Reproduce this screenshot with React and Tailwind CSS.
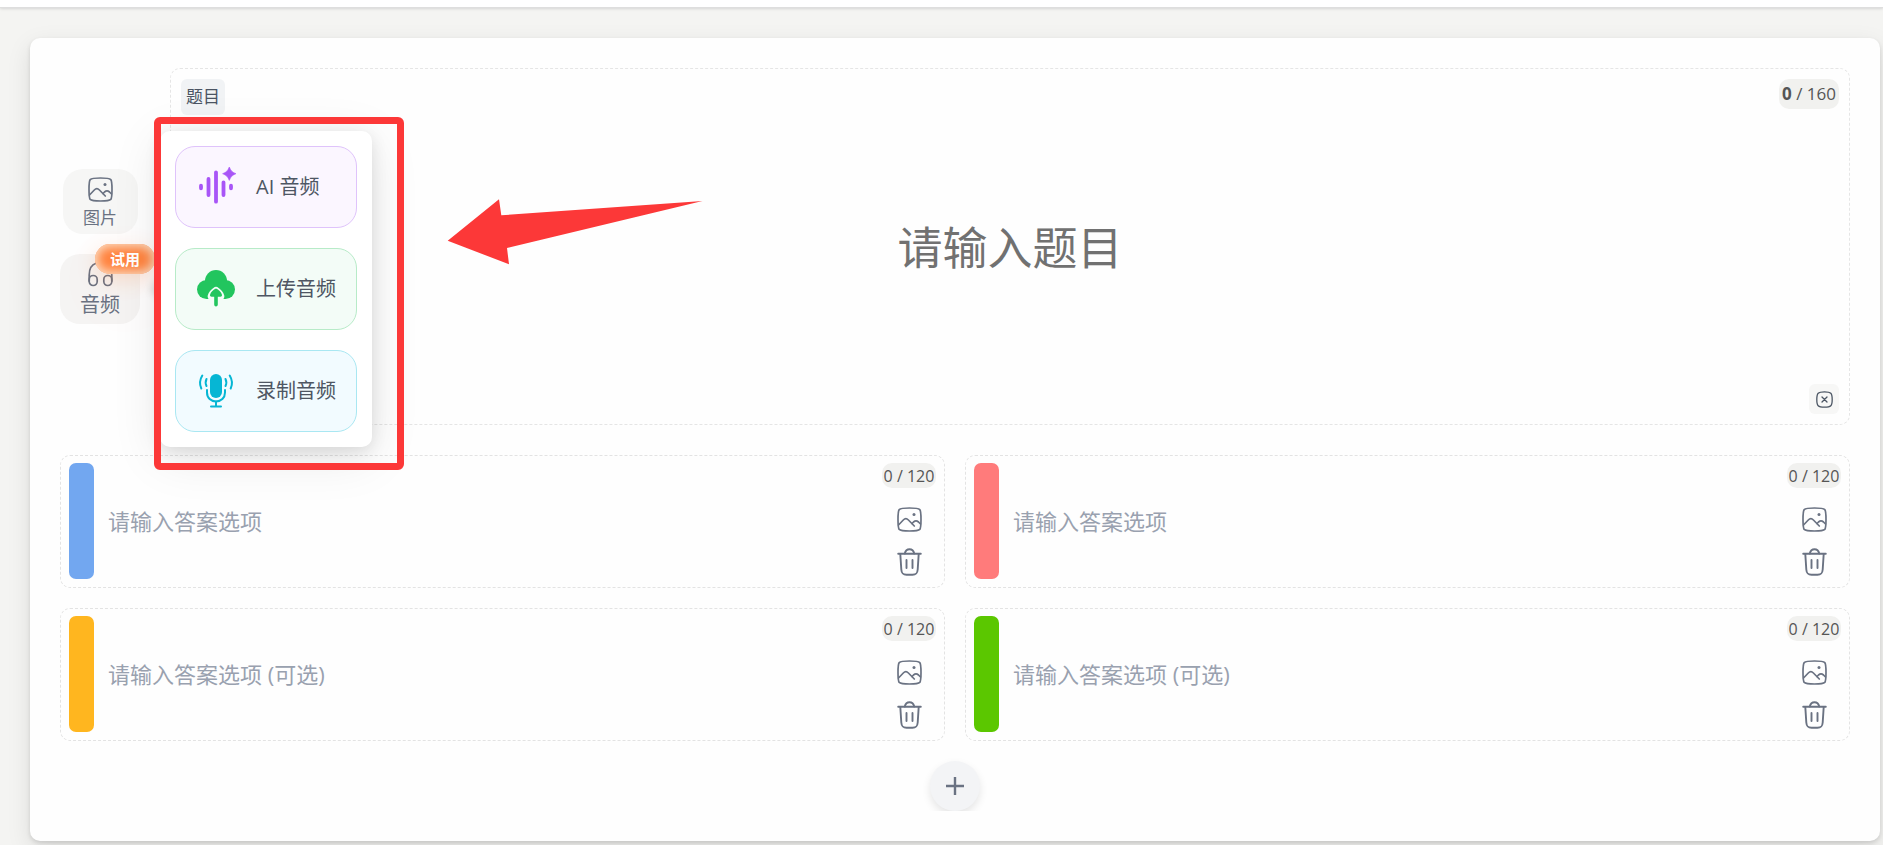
import { useState } from 'react';

const answers = [
  { id: 'a', bar: 'bg-[#72a7f0]', placeholder: '请输入答案选项' },
  { id: 'b', bar: 'bg-[#ff7b7b]', placeholder: '请输入答案选项' },
  { id: 'c', bar: 'bg-[#ffb61f]', placeholder: '请输入答案选项 (可选)' },
  { id: 'd', bar: 'bg-[#5bc700]', placeholder: '请输入答案选项 (可选)' },
];

function ImageIcon({ className }) {
  return (
    <svg viewBox="0 0 25 25" fill="none" stroke="currentColor" strokeWidth="1.700" strokeLinecap="round" strokeLinejoin="round" className={className}>
      <path d="M12.500 1C19 1 21.600 1.400 22.800 2.600C23.800 3.800 24 6.500 24 12.500S23.800 21.200 22.800 22.400C21.600 23.600 19 24 12.500 24S3.400 23.600 2.200 22.400C1.200 21.200 1 18.500 1 12.500S1.200 3.800 2.200 2.600C3.400 1.400 6 1 12.500 1Z" />
      <path d="M1.500 18L6.300 13C8 11.300 9.700 11.300 11.400 13L17.300 19" />
      <path d="M15 16.500L16.500 15C18 13.700 20 13.700 21.500 15L23.500 17" />
      <circle cx="17" cy="7.500" r="1.500" fill="currentColor" stroke="none" />
    </svg>
  );
}

function TrashIcon({ className }) {
  return (
    <svg viewBox="0 0 25 28" fill="none" stroke="currentColor" strokeWidth="1.900" strokeLinecap="round" strokeLinejoin="round" className={className}>
      <path d="M1.200 5.800H23.800" />
      <path d="M7.800 5.500C8.500 2.500 9.500 1.300 12.500 1.300S16.500 2.500 17.200 5.500" />
      <path d="M3.300 6L4.300 21.500C4.600 25.500 5.800 26.700 9.500 26.700H15.500C19.200 26.700 20.400 25.500 20.700 21.500L21.700 6" />
      <path d="M9.500 12V20M15.500 12V20" />
    </svg>
  );
}

function HeadphonesIcon({ className }) {
  return (
    <svg viewBox="0 0 25 25" fill="none" stroke="currentColor" strokeWidth="1.700" strokeLinecap="round" strokeLinejoin="round" className={className}>
      <path d="M8 1.200C4 2.500 1.200 7 1.200 13V19" />
      <path d="M17 1.200C21 2.500 23.800 7 23.800 13V19" />
      <rect x="1.200" y="13.500" width="8" height="10" rx="4" />
      <rect x="15.800" y="13.500" width="8" height="10" rx="4" />
    </svg>
  );
}

function CloseBoxIcon({ className }) {
  return (
    <svg viewBox="0 0 17 17" fill="none" stroke="currentColor" strokeWidth="1.300" strokeLinecap="round" className={className}>
      <path d="M8.500 .8C15 .8 16.200 2 16.200 8.500S15 16.200 8.500 16.200S.8 15 .8 8.500S2 .8 8.500 .8Z" />
      <path d="M6 6L11 11M11 6L6 11" />
    </svg>
  );
}

function AiAudioIcon({ className }) {
  return (
    <svg viewBox="0 0 40 40" fill="none" stroke="currentColor" strokeWidth="3.800" strokeLinecap="round" className={className}>
      <path d="M5 18.700V21.300M12.500 12V28M20 5.300V34.700M27.500 15.300V28M35 18.700V21.300" />
      <path d="M33.300 0C34.800 3.800 36.200 5.200 40 6.700C36.200 8.200 34.800 9.600 33.300 13.400C31.800 9.600 30.400 8.200 26.600 6.700C30.400 5.200 31.800 3.800 33.300 0Z" fill="currentColor" stroke="currentColor" strokeWidth=".6" />
    </svg>
  );
}

function CloudUploadIcon({ className }) {
  return (
    <svg viewBox="0 0 40 40" fill="none" className={className}>
      <g fill="currentColor">
        <circle cx="20" cy="12" r="11" />
        <circle cx="10.500" cy="20.500" r="9.500" />
        <circle cx="29.500" cy="20.500" r="9.500" />
        <rect x="10.500" y="17" width="19" height="13" />
      </g>
      <path d="M20 20C17 22 14.500 24.500 14 27C13.700 28.500 14.500 29 16.500 29V40H23.500V29C25.500 29 26.300 28.500 26 27C25.500 24.500 23 22 20 20Z" fill="#f3fcf7" stroke="#f3fcf7" strokeWidth="4.600" strokeLinejoin="round" />
      <path d="M20 19.500C17.300 20.700 14.900 23 14.200 25.300C13.600 26.900 14.300 27.800 15.700 27.800H18.200V35.500C18.200 38 21.800 38 21.800 35.500V27.800H24.300C25.700 27.800 26.400 26.900 25.800 25.300C25.100 23 22.700 20.700 20 19.500Z" fill="currentColor" />
    </svg>
  );
}

function MicIcon({ className }) {
  return (
    <svg viewBox="0 0 40 40" fill="none" stroke="currentColor" strokeWidth="2" strokeLinecap="round" className={className}>
      <rect x="14" y="3" width="12" height="24" rx="6" fill="currentColor" stroke="none" />
      <path d="M11 19V21.500C11 27 15 30.500 20 30.500S29 27 29 21.500V19" />
      <path d="M20 30.500V35M15 35.500H25" />
      <path d="M10.500 8Q8.800 11.500 10.500 15M6.300 4.500Q2.300 11 5.300 17.500" />
      <path d="M29.500 8Q31.200 11.500 29.500 15M33.700 4.500Q37.700 11 34.700 17.500" />
    </svg>
  );
}

function AudioOption({ icon, label, className }) {
  return (
    <button type="button" className={`flex h-[82px] items-center gap-5 rounded-[20px] border px-5 text-xl text-[#4e5663] ${className}`}>
      {icon}
      <span className="whitespace-nowrap">{label}</span>
    </button>
  );
}

function AudioMenu() {
  return (
    <div className="absolute top-1/2 left-full z-10 ml-5 -translate-y-1/2">
      <span className="absolute top-1/2 -left-1 size-2 -translate-y-1/2 rotate-45 bg-gray-200 shadow-[0_0_8px_3px_rgba(0,0,0,0.15)]" />
      <div className="relative flex w-[212px] flex-col gap-5 rounded-[10px] bg-white p-[15px] shadow-[0_10px_50px_rgba(0,0,0,0.1),0_4px_16px_rgba(0,0,0,0.1)]">
        <AudioOption label="AI 音频" className="border-[#dfc3fb] bg-[#fbf6ff]" icon={<AiAudioIcon className="size-10 text-[#a855f7]" />} />
        <AudioOption label="上传音频" className="border-[#b7ebc8] bg-[#f3fcf7]" icon={<CloudUploadIcon className="size-10 text-[#22c55e]" />} />
        <AudioOption label="录制音频" className="border-[#a9e7f2] bg-[#f2fbff]" icon={<MicIcon className="size-10 text-[#06b6d4]" />} />
      </div>
    </div>
  );
}

function MediaTools() {
  return (
    <div className="flex w-20 flex-col items-center justify-center gap-5 text-gray-500">
      <button type="button" className="flex h-[65px] w-[75px] flex-col items-center rounded-[20px] bg-[#f6f6f5] pt-2">
        <ImageIcon className="size-[25px]" />
        <span className="mt-1 text-[17px] leading-6">图片</span>
      </button>
      <div className="relative">
        <button type="button" className="flex h-[70px] w-20 flex-col items-center rounded-[20px] bg-[#f5f4f3] pt-2">
          <HeadphonesIcon className="size-[25px]" />
          <span className="mt-1 text-xl leading-7">音频</span>
        </button>
        <span className="absolute -top-[10px] -right-[15px] flex h-[30px] w-[60px] items-center justify-center rounded-full bg-[#ff8440] text-[15px] font-bold text-white shadow-[inset_0_0_10px_3px_#fcd9bd,0_6px_20px_rgba(255,120,50,0.2),0_20px_80px_rgba(255,120,50,0.06)]">
          试用
        </span>
        <AudioMenu />
      </div>
    </div>
  );
}

function QuestionBox() {
  const [text, setText] = useState('');

  return (
    <div className="relative flex h-[357px] flex-1 rounded-[10px] border border-dashed border-[#e5e5e5]">
      <label htmlFor="question" className="absolute top-[10px] left-[10px] flex h-9 items-center rounded-md bg-[#f1f3f5] px-[5px] text-[17px] text-[#4b5563]">
        题目
      </label>
      <input
        id="question"
        value={text}
        maxLength={160}
        onChange={(e) => setText(e.target.value)}
        placeholder="请输入题目"
        className="w-full bg-transparent pt-[2px] text-center text-[45px] text-gray-700 outline-none placeholder:text-[#717171]"
      />
      <div className="absolute top-[10px] right-[10px] flex h-[30px] w-[60px] items-center justify-center rounded-[10px] bg-[#f1f1ef] text-[17px] whitespace-pre text-[#555]">
        <b className="font-bold">{text.length}</b> / 160
      </div>
      <button type="button" aria-label="清空" className="absolute right-[10px] bottom-[10px] flex size-[30px] items-center justify-center rounded-md bg-[#f7f7f6] text-[#4b5563]">
        <CloseBoxIcon className="size-[17px]" />
      </button>
    </div>
  );
}

function AnswerBox({ bar, placeholder }) {
  const [text, setText] = useState('');

  return (
    <div className="flex h-[133px] rounded-[10px] border border-dashed border-[#e3e3e3] px-2 pt-[7px] pb-2">
      <div className={`w-[25px] shrink-0 rounded-[7px] ${bar}`} />
      <input
        aria-label={placeholder}
        value={text}
        maxLength={120}
        onChange={(e) => setText(e.target.value)}
        placeholder={placeholder}
        className="min-w-0 flex-1 bg-transparent pl-[14px] text-[22px] text-gray-700 outline-none placeholder:text-gray-400"
      />
      <div className="flex w-[54px] shrink-0 flex-col items-center text-gray-500">
        <div className="flex h-[25px] w-full items-center justify-center rounded-[10px] bg-[#f1f1ef] text-base whitespace-nowrap text-[#555]">
          {text.length} / 120
        </div>
        <button type="button" aria-label="图片" className="mt-[19px]">
          <ImageIcon className="size-[25px]" />
        </button>
        <button type="button" aria-label="删除" className="mt-4">
          <TrashIcon className="h-7 w-[25px]" />
        </button>
      </div>
    </div>
  );
}

export default function App() {
  return (
    <div className="relative min-h-screen overflow-hidden bg-[#f4f4f2] font-['Open_Sans','Noto_Sans_CJK_SC',sans-serif]">
      <header className="h-2 border-b border-[#dedede] bg-white shadow-[0_1px_3px_rgba(0,0,0,0.12)]" />

      <main className="mt-[30px] mr-[3px] mb-1 ml-[30px] rounded-[10px] bg-[#fefefe] p-[30px] shadow-[0_8px_24px_rgba(0,0,0,0.1),0_2px_4px_rgba(0,0,0,0.12)]">
        <div className="flex gap-[30px]">
          <MediaTools />
          <QuestionBox />
        </div>

        <div className="mt-[30px] grid grid-cols-2 gap-5">
          {answers.map((a) => (
            <AnswerBox key={a.id} bar={a.bar} placeholder={a.placeholder} />
          ))}
        </div>

        <div className="flex justify-center overflow-hidden pt-5">
          <button type="button" aria-label="添加选项" className="flex size-[50px] items-center justify-center rounded-full bg-[#f3f4f6] text-gray-500 shadow-[0_4px_8px_rgba(0,0,0,0.1)]">
            <svg viewBox="0 0 18 18" stroke="currentColor" strokeWidth="2.400" className="size-[18px]">
              <path d="M9 0V18M0 9H18" />
            </svg>
          </button>
        </div>
      </main>

      {/* highlight over the audio menu */}
      <div className="pointer-events-none absolute top-[117px] left-[154px] z-20 h-[353px] w-[250px] rounded-md border-[7px] border-[#fc3838]" />
      <svg viewBox="0 0 256 66" className="pointer-events-none absolute top-[199px] left-[447px] z-20 h-[66px] w-64" fill="#fc3838">
        <path d="M.7 41.700L52 .3L54.300 16.300L255.500 2L60 49L62 65.300Z" />
      </svg>
    </div>
  );
}
